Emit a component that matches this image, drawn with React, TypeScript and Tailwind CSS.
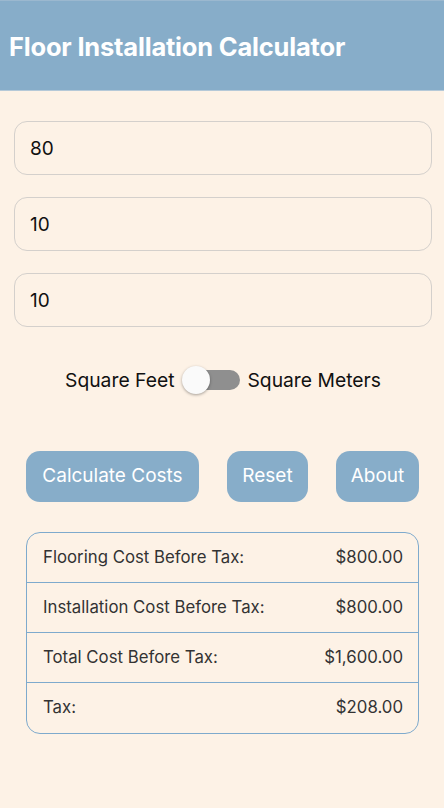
import React from "react";

const rows: [string, string][] = [
  ["Flooring Cost Before Tax:", "$800.00"],
  ["Installation Cost Before Tax:", "$800.00"],
  ["Total Cost Before Tax:", "$1,600.00"],
  ["Tax:", "$208.00"],
];

export default function App() {
  return (
    <div
      className="min-h-[808px] w-full bg-[#fdf2e6] text-black"
      style={{ fontFamily: "Inter, 'Noto Sans', sans-serif" }}
    >
      <header className="h-[91px] bg-[#87adc9] border-t border-t-[#9bb8cf] border-b border-b-[#b5c9d8] flex items-center pl-[9px] pt-[4px]">
        <h1 className="text-white font-bold text-[25.5px] tracking-[-0.2px]">Floor Installation Calculator</h1>
      </header>

      <div className="pl-[14px] pr-[12px] pt-[30px] flex flex-col gap-[22px]">
        {["80", "10", "10"].map((v, i) => (
          <div
            key={i}
            className="h-[54px] rounded-[13px] border-[1.5px] border-[#d4d0cc] flex items-center pl-[15px] pt-[3px] text-[19px] text-[#111]"
          >
            {v}
          </div>
        ))}
      </div>

      <div className="flex items-center justify-center h-[28px] mt-[39px] text-[19.3px] text-[#111] pl-[2px]">
        <span>Square Feet</span>
        <div className="relative w-[58px] h-[28px] ml-[8px] mr-[7px] flex items-center">
          <div className="absolute left-[6px] right-0 h-[20px] rounded-full bg-[#8f8f8f]" />
          <div className="absolute left-0 top-0 w-[28px] h-[28px] rounded-full bg-[#fafafa] shadow-[0_1px_3px_rgba(0,0,0,0.35)]" />
        </div>
        <span>Square Meters</span>
      </div>

      <div className="flex items-center pl-[26px] gap-[28px] mt-[57px]">
        <button className="h-[51px] w-[173px] rounded-[14px] bg-[#87adc9] text-white text-[19px]">Calculate Costs</button>
        <button className="h-[51px] w-[81px] rounded-[14px] bg-[#87adc9] text-white text-[19px]">Reset</button>
        <button className="h-[51px] w-[83px] rounded-[14px] bg-[#87adc9] text-white text-[19px]">About</button>
      </div>

      <div className="ml-[26px] mr-[25px] mt-[30px] border-[1.5px] border-[#7eaacd] rounded-[14px] overflow-hidden">
        {rows.map(([l, v], i) => (
          <div
            key={i}
            className={`h-[50px] flex items-center justify-between pl-[16px] pr-[15px] text-[16.8px] text-[#333] ${i < rows.length - 1 ? "border-b-[1.5px] border-b-[#7eaacd]" : ""}`}
          >
            <span>{l}</span>
            <span>{v}</span>
          </div>
        ))}
      </div>
    </div>
  );
}
